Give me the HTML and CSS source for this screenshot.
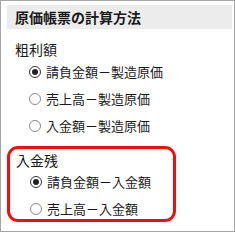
FILE: index.html
```html
<!DOCTYPE html>
<html lang="ja">
<head>
    <meta charset="UTF-8">
    <title>原価帳票の計算方法</title>
    <link rel="stylesheet" href="styles.css">
</head>
<body>
    <div class="panel">
        <div class="panel-title">原価帳票の計算方法</div>

        <div class="group">
            <div class="group-label">粗利額</div>
            <label class="option"><span class="radio checked"></span>請負金額－製造原価</label>
            <label class="option"><span class="radio"></span>売上高－製造原価</label>
            <label class="option"><span class="radio"></span>入金額－製造原価</label>
        </div>

        <div class="group highlight">
            <div class="group-label">入金残</div>
            <label class="option"><span class="radio checked"></span>請負金額－入金額</label>
            <label class="option"><span class="radio"></span>売上高－入金額</label>
        </div>
    </div>
</body>
</html>
```

FILE: styles.css
```css
/* ===== BASE ===== */
* {
    margin: 0;
    padding: 0;
    box-sizing: border-box;
}

body {
    font-family: "Noto Sans CJK JP", "Noto Sans", sans-serif;
    color: #1a1a1a;
    background: #fff;
}

/* ===== PANEL ===== */
.panel {
    width: 235px;
    height: 232px;
    border: 1px solid #a6a6a6;
    padding: 4px 2px 0 6px;
}

.panel-title {
    height: 24px;
    line-height: 24px;
    padding-left: 8px;
    background: #ececec;
    font-size: 14px;
    font-weight: 700;
}

/* ===== GROUPS ===== */
.group {
    padding: 11px 0 0 8px;
}

.group-label {
    font-size: 14px;
    line-height: 18px;
}

.option {
    display: flex;
    align-items: center;
    height: 27px;
    padding-left: 14px;
    font-size: 13px;
}

.radio {
    width: 12px;
    height: 12px;
    border: 1px solid #8a8a8a;
    border-radius: 50%;
    margin-right: 5px;
    display: flex;
    align-items: center;
    justify-content: center;
}

.radio.checked {
    border-color: #333;
}

.radio.checked::after {
    content: "";
    width: 6px;
    height: 6px;
    border-radius: 50%;
    background: #222;
}

/* red frame around the second group */
.highlight {
    width: 169px;
    margin-top: 7px;
    padding: 3px 0 0 6px;
    border: 3px solid #ee1010;
    border-radius: 11px;
}

.highlight .group-label {
    line-height: 16px;
}

.highlight .option:last-child {
    margin-bottom: -3px;
}
```
